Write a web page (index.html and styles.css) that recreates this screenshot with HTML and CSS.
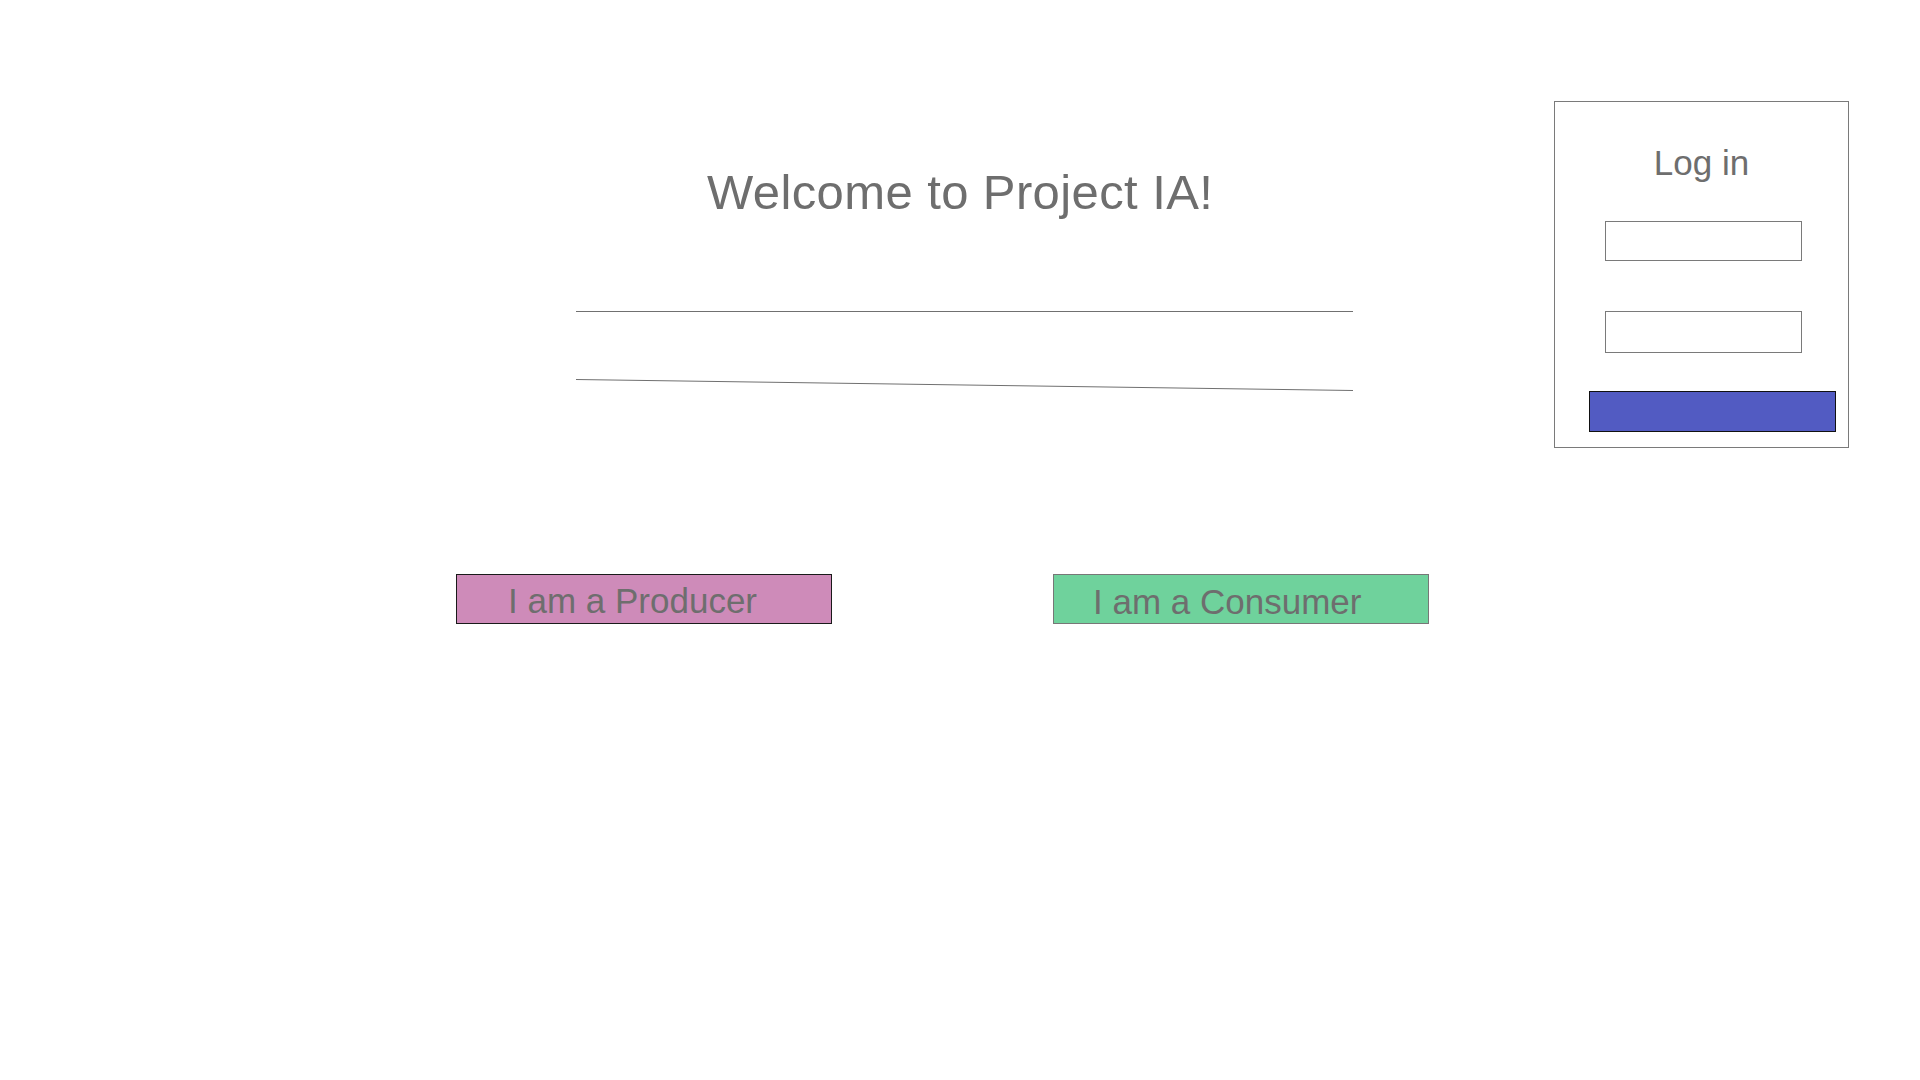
FILE: index.html
```html
<!DOCTYPE html>
<html lang="en">
<head>
<meta charset="utf-8">
<title>Project IA</title>
<link rel="stylesheet" href="styles.css">
</head>
<body>
<div class="page">
  <main class="main">
    <h1 class="title">Welcome to Project IA!</h1>
    <svg class="lines" width="778" height="81" viewBox="0 0 778 81" aria-hidden="true">
      <line x1="0" y1="0.5" x2="777" y2="0.5" stroke="#707070" stroke-width="1"/>
      <line x1="0" y1="68.5" x2="777" y2="79.5" stroke="#707070" stroke-width="1"/>
    </svg>
    <div class="choices">
      <button class="choice producer" type="button">I am a Producer</button>
      <button class="choice consumer" type="button">I am a Consumer</button>
    </div>
  </main>
  <aside class="login">
    <h2 class="login-title">Log in</h2>
    <input class="field field-user" type="text" aria-label="Username">
    <input class="field field-pass" type="password" aria-label="Password">
    <button class="login-btn" type="button" aria-label="Log in"></button>
  </aside>
</div>
</body>
</html>
```
FILE: styles.css
```css
html, body {
  margin: 0;
  padding: 0;
  background: #ffffff;
}

body {
  font-family: "Liberation Sans", Arial, Helvetica, sans-serif;
  color: #6e6e6e;
}

.page {
  display: flex;
  align-items: flex-start;
  width: 1920px;
  height: 1080px;
  overflow: hidden;
}

.main {
  flex: none;
  width: 1554px;
}

.title {
  margin: 0;
  padding: 168px 0 0 707px;
  font-size: 49px;
  line-height: 49px;
  font-weight: normal;
  letter-spacing: 0.4px;
  white-space: nowrap;
}

.lines {
  display: block;
  margin: 94px 0 0 576px;
}

.choices {
  display: flex;
  gap: 221px;
  margin: 182px 0 0 456px;
}

.choice {
  box-sizing: border-box;
  width: 376px;
  height: 50px;
  margin: 0;
  padding: 3px 0 0 0;
  font-family: inherit;
  font-size: 35px;
  line-height: 44px;
  color: #6e6e6e;
  text-align: left;
  white-space: nowrap;
  cursor: pointer;
}

.producer {
  background: #ce8bb9;
  border: 1px solid #1a1a1a;
  padding-left: 51px;
}

.consumer {
  background: #6fd29c;
  border: 1px solid #777777;
  padding-left: 39px;
  padding-top: 5px;
}

.login {
  flex: none;
  box-sizing: border-box;
  width: 295px;
  height: 347px;
  margin-top: 101px;
  border: 1px solid #7a7a7a;
}

.login-title {
  margin: 0;
  padding-top: 41px;
  font-size: 35px;
  line-height: 40px;
  font-weight: normal;
  text-align: center;
}

.field {
  display: block;
  box-sizing: border-box;
  width: 197px;
  margin: 0 0 0 50px;
  padding: 0;
  border: 1px solid #7a7a7a;
  border-radius: 0;
  background: #ffffff;
  outline: none;
}

.field-user {
  height: 40px;
  margin-top: 38px;
}

.field-pass {
  height: 42px;
  margin-top: 50px;
}

.login-btn {
  display: block;
  box-sizing: border-box;
  width: 247px;
  height: 41px;
  margin: 38px 0 0 34px;
  padding: 0;
  border: 1px solid #111111;
  border-radius: 0;
  background: #525bc2;
  cursor: pointer;
}
```
